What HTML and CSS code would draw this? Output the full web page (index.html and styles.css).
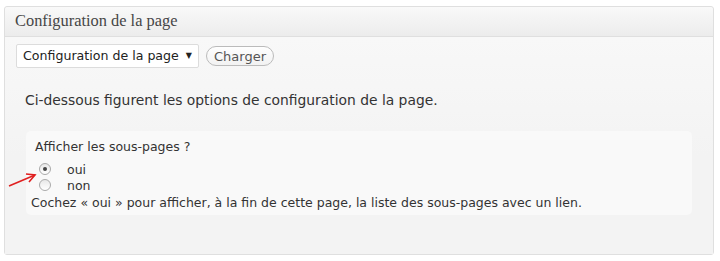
FILE: index.html
```html
<!DOCTYPE html>
<html lang="fr">
<head>
<meta charset="utf-8">
<title>Configuration de la page</title>
<link rel="stylesheet" href="styles.css">
</head>
<body>
<div class="panel">
  <div class="panel-head">Configuration de la page</div>
  <div class="panel-body">
    <div class="toolbar">
      <div class="select">Configuration de la page <span class="caret">▼</span></div>
      <button class="btn">Charger</button>
    </div>
    <p class="intro">Ci-dessous figurent les options de configuration de la page.</p>
    <div class="box">
      <div class="q">Afficher les sous-pages ?</div>
      <div class="opts">
        <label class="opt"><span class="radio on"></span>oui</label>
        <label class="opt"><span class="radio"></span>non</label>
      </div>
      <div class="help">Cochez « oui » pour afficher, à la fin de cette page, la liste des sous-pages avec un lien.</div>
      <svg class="arrow" width="30" height="16" viewBox="0 0 30 16"><path d="M1 14 L27 3" stroke="#e02020" stroke-width="1.6" fill="none"/><path d="M18 2 L27 3 L21 10" stroke="#e02020" stroke-width="1.6" fill="none" stroke-linejoin="miter"/></svg>
    </div>
  </div>
</div>
</body>
</html>
```
FILE: styles.css
```css
html, body { margin: 0; padding: 0; background: #fff; }
body { padding: 6px 6px 6px 4px; font-family: "DejaVu Sans", sans-serif; color: #333; }
.panel {
  width: 708px; height: 247px;
  border: 1px solid #dfdfdf; border-radius: 3px;
  background: #f5f5f5;
  box-sizing: content-box;
}
.panel-head {
  height: 29px; line-height: 28px;
  padding-left: 10px;
  font-family: "Liberation Serif", serif; font-size: 16.4px; color: #464646;
  background: linear-gradient(#f9f9f9, #ececec);
  border-bottom: 1px solid #dfdfdf;
  border-radius: 3px 3px 0 0;
}
.panel-body { padding: 7px 11px 0 11px; background: linear-gradient(#f8f8f8, #f3f3f3 120px); height: 210px; }
.toolbar { display: flex; align-items: center; gap: 7px; }
.select {
  height: 22px; line-height: 22px;
  padding: 0 6px;
  border: 1px solid #dcdcdc; border-radius: 2px; background: #fff;
  font-size: 12.6px; color: #222; width: 169px;
  display: flex; justify-content: space-between;
}
.caret { font-size: 8px; }
.btn {
  height: 20px; padding: 0 7px;
  border: 1px solid #bbb; border-radius: 11px;
  background: linear-gradient(#fefefe, #f2f2f2);
  font-family: "DejaVu Sans", sans-serif; font-size: 13px; color: #555;
}
.intro { margin: 24px 0 0 9px; font-size: 13.85px; color: #333; }
.box {
  position: relative;
  margin: 23px 10px 0 10px; padding: 8px 10px 5px 9px;
  background: #f9f9f9; border-radius: 5px;
  font-size: 12.5px;
}
.q { color: #333; }
.opts { margin-top: 7px; padding-left: 4px; }
.opt { display: flex; align-items: center; height: 16px; gap: 16px; }
.radio {
  width: 10px; height: 10px; border-radius: 50%;
  border: 1px solid #aaa; background: linear-gradient(#e8e8e8, #fff);
  position: relative;
}
.radio.on::after { content: ""; position: absolute; left: 3px; top: 3px; width: 4px; height: 4px; border-radius: 50%; background: #444; }
.help { margin-left: -4px; margin-top: 2px; }
.arrow { position: absolute; left: -18px; top: 41px; }
```
